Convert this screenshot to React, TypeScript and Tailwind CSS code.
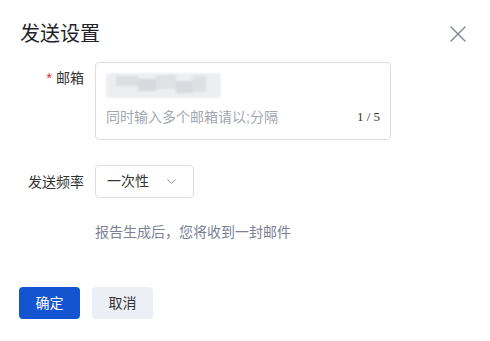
import { ChevronDown } from 'lucide-react';

const cjk = "font-['Liberation_Sans','Noto_Sans_CJK_SC',sans-serif]";

export default function App() {
  return (
    <div className={`w-[490px] h-[341px] bg-white px-5 pt-[20px] ${cjk}`}>
      {/* Header */}
      <div className="flex items-center justify-between">
        <h1 className="text-[20px] leading-[28px] text-[#1f2329]">发送设置</h1>
        <button className="mr-[4px] text-[#7b8190]">
          <svg width="16" height="16" viewBox="0 0 16 16" fill="none" stroke="currentColor" strokeWidth="1.4" strokeLinecap="round">
            <path d="M1 1L15 15M15 1L1 15" />
          </svg>
        </button>
      </div>

      {/* Email */}
      <div className="mt-[14px] flex">
        <label className="w-[64px] text-right text-[14px] leading-[32px] text-[#333]">
          <span className="mr-[4px] text-[#e02424]">*</span>邮箱
        </label>
        <div className="ml-[11px] h-[78px] w-[296px] rounded-[4px] border border-[#d8dde8] px-[10px] pt-[10px]">
          <div className="flex h-[25px] w-[115px] overflow-hidden rounded-[3px] bg-[#eceef1] blur-[1px]">
            <div className="ml-[10px] mt-[3px] h-[10px] w-[22px] bg-[#dcdee2]" />
            <div className="mt-[6px] h-[12px] w-[18px] bg-[#d6d9dd]" />
            <div className="mt-[2px] h-[14px] w-[20px] bg-[#dfe1e4]" />
            <div className="mt-[8px] h-[12px] w-[16px] bg-[#d8dbdf]" />
            <div className="mt-[3px] h-[16px] w-[14px] bg-[#dee0e3]" />
          </div>
          <div className="mt-[9px] flex items-center justify-between">
            <span className="text-[14px] leading-[20px] text-[#a3a7b0]">同时输入多个邮箱请以;分隔</span>
            <span className="font-['Liberation_Serif',serif] text-[13px] text-[#333]">1 / 5</span>
          </div>
        </div>
      </div>

      {/* Frequency */}
      <div className="mt-[25px] flex items-center">
        <label className="w-[64px] text-right text-[14px] leading-[32px] text-[#333]">发送频率</label>
        <button className="ml-[11px] flex h-[33px] w-[99px] items-center justify-between rounded-[4px] border border-[#d8dde8] pl-[11px] pr-[14px] text-[14px] text-[#333]">
          <span>一次性</span>
          <ChevronDown size={15} strokeWidth={1.3} className="text-[#6b7280]" />
        </button>
      </div>

      <p className="ml-[75px] mt-[23px] text-[14px] leading-[22px] text-[#7a8193]">报告生成后，您将收到一封邮件</p>

      {/* Footer */}
      <div className="ml-[-1px] mt-[44px] flex gap-[12px]">
        <button className="h-[32px] w-[61px] rounded-[4px] bg-[#1554d1] text-[14px] text-white">确定</button>
        <button className="h-[32px] w-[61px] rounded-[4px] bg-[#eceff5] text-[14px] text-[#333]">取消</button>
      </div>
    </div>
  );
}
